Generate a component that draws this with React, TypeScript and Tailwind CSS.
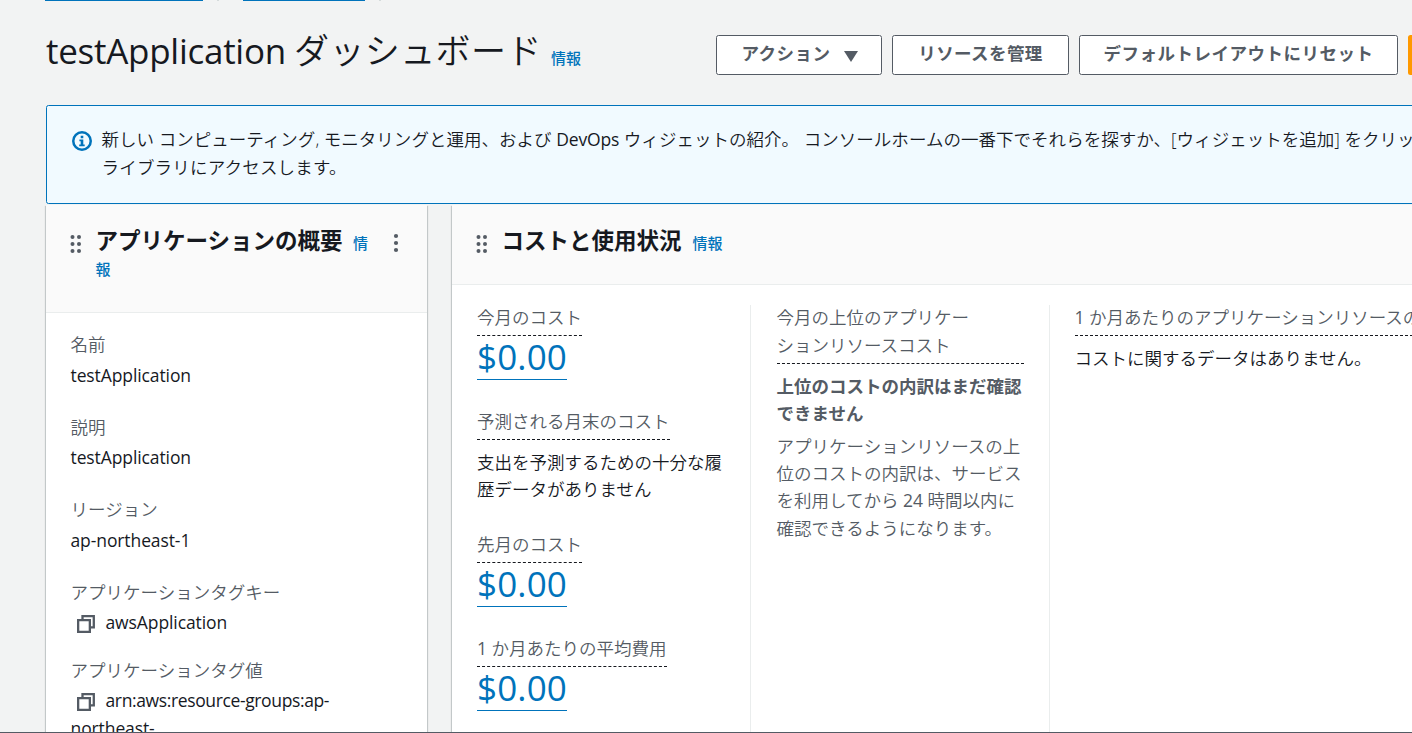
import React from 'react';

const latin = "font-['Open_Sans','Noto_Sans_CJK_JP',sans-serif]";

function DragHandle() {
  return (
    <svg width="12" height="20" viewBox="0 0 12 20" className="shrink-0 fill-[#545b64]">
      {[3, 10, 17].map((y) => (
        <g key={y}>
          <circle cx="2.5" cy={y} r="2" />
          <circle cx="9" cy={y} r="2" />
        </g>
      ))}
    </svg>
  );
}

function Kebab() {
  return (
    <svg width="6" height="20" viewBox="0 0 6 20" className="shrink-0 fill-[#545b64]">
      {[3, 10, 17].map((y) => (
        <circle key={y} cx="3" cy={y} r="2.1" />
      ))}
    </svg>
  );
}

function CopyIcon() {
  return (
    <svg width="18" height="18" viewBox="0 0 18 18" className="mt-[2px] shrink-0 fill-none stroke-[#545b64] stroke-[2.3]">
      <path d="M5.5 5V1.15h11.3v11.3H13" />
      <path d="M1.15 5.2h11.7v11.6H1.15z" />
    </svg>
  );
}

function InfoIcon() {
  return (
    <svg width="20" height="20" viewBox="0 0 20 20" className="shrink-0">
      <circle cx="10" cy="10" r="8.75" className="fill-none stroke-[#0073bb] stroke-[2.5]" />
      <path d="M8.7 4.8h2.6v2.4H8.7zM7.4 8.4h3.9v5h1.4v1.8H7.2v-1.8h1.5v-3.2H7.4z" className="fill-[#0073bb]" />
    </svg>
  );
}

function Field({ label, children }: { label: string; children: React.ReactNode }) {
  return (
    <div>
      <div className="font-[350] text-[#545b64]">{label}</div>
      <div className="mt-[3px] tracking-[-0.1px]">{children}</div>
    </div>
  );
}

function Term({ children }: { children: React.ReactNode }) {
  return (
    <span className="block w-fit whitespace-nowrap border-b border-dashed border-[#16191f] pb-[3.5px] pt-[0.5px] font-[350] text-[#545b64]">
      {children}
    </span>
  );
}

function Amount() {
  return (
    <div className="mt-[2px] h-[42px] w-[90px] border-b border-[#0073bb] text-[35px] leading-[38px] tracking-[0.15px] text-[#0073bb]">
      $0.00
    </div>
  );
}

const cardShadow =
  'shadow-[0_1px_1px_0_rgba(0,28,36,0.3),1px_1px_1px_0_rgba(0,28,36,0.15),-1px_1px_1px_0_rgba(0,28,36,0.15)]';
const button =
  'flex h-[40px] shrink-0 items-center justify-center rounded-[2.5px] border border-[#545b64] bg-white pb-[3px] font-bold text-[#545b64] whitespace-nowrap';

export default function App() {
  return (
    <div
      className={`${latin} flex h-[733px] w-[1412px] flex-col overflow-hidden border-b border-[#545b64] bg-[#f2f3f3] text-[17.5px] leading-[27.5px] text-[#16191f]`}
      lang="ja"
    >
      <div className="flex h-px shrink-0 pl-[45px]">
        <div className="w-[158px] bg-[#0073bb]" />
        <div className="ml-[14px] w-[2px] bg-[#d5dbdb]" />
        <div className="ml-[24px] w-[122px] bg-[#0073bb]" />
        <div className="ml-[14px] w-[2px] bg-[#d5dbdb]" />
      </div>

      <header className="flex h-[104px] shrink-0 pl-[46px]">
        <h1 className="flex w-[670px] shrink-0 items-baseline whitespace-nowrap pt-[27px] text-[35px] leading-[45px]">
          <span className="w-[248px] tracking-[-0.27px]">testApplication</span>
          <span className="w-[257px] font-[350] tracking-[0.4px]">ダッシュボード</span>
          <a className="text-[15px] font-medium text-[#0073bb]">情報</a>
        </h1>
        <div className="flex gap-[10px] pt-[34px]">
          <button className={`${button} w-[166px] gap-[13px] pl-[1px]`}>
            <span className="tracking-[0.5px]">アクション</span>
            <svg width="14" height="12" viewBox="0 0 14 12" className="mt-[4px] fill-[#545b64]">
              <path d="M0 1h14L7 12z" />
            </svg>
          </button>
          <button className={`${button} w-[177px] tracking-[0.4px]`}>リソースを管理</button>
          <button className={`${button} w-[319px] tracking-[0.5px]`}>デフォルトレイアウトにリセット</button>
          <button className="h-[40px] w-[200px] shrink-0 rounded-[2.5px] bg-[#ff9900]" />
        </div>
      </header>

      <section className="ml-[46px] flex h-[99px] w-[1500px] shrink-0 rounded-[2.5px] border border-[#0073bb] bg-[#f1faff] pl-[25px] pt-[20px] font-[350]">
        <div className="pt-[5px]">
          <InfoIcon />
        </div>
        <div className="ml-[9.5px] whitespace-nowrap">
          <p className="tracking-[0.03px]">
            新しい コンピューティング, モニタリングと運用、および{' '}
            <span className="font-normal tracking-[-0.15px]">DevOps</span>{' '}
            ウィジェットの紹介。 コンソールホームの一番下でそれらを探すか、[ウィジェットを追加] をクリックして
          </p>
          <p className="tracking-[0.2px]">ライブラリにアクセスします。</p>
        </div>
      </section>

      <main className="flex shrink-0 gap-[25px] pl-[46px] pt-[1px]">
        <section className={`h-[600px] w-[381px] shrink-0 bg-white ${cardShadow}`}>
          <div className="flex h-[108px] border-b border-[#eaeded] bg-[#fafafa] pl-[24px] pt-[22px]">
            <div className="pt-[7px]">
              <DragHandle />
            </div>
            <h2 className="ml-[13.5px] w-[284.5px] break-all pt-[1px] text-[22.5px] font-bold leading-[26px]">
              アプリケーションの概要{' '}
              <a className="ml-[4.5px] text-[15px] font-medium leading-[20px] text-[#0073bb]">情報</a>
            </h2>
            <div className="ml-[13px] pt-[6px]">
              <Kebab />
            </div>
          </div>
          <div className="flex flex-col gap-[24.5px] pl-[24.5px] pt-[18px]">
            <Field label="名前">testApplication</Field>
            <Field label="説明">testApplication</Field>
            <Field label="リージョン">ap-northeast-1</Field>
            <div className="flex flex-col gap-[20px]">
              <Field label="アプリケーションタグキー">
                <div className="flex items-center gap-[10.5px] pl-[6.5px]">
                  <CopyIcon />
                  awsApplication
                </div>
              </Field>
              <Field label="アプリケーションタグ値">
                <div className="flex items-center gap-[10.5px] pl-[6.5px] tracking-[-0.37px]">
                  <CopyIcon />
                  arn:aws:resource-groups:ap-
                </div>
                <div>northeast-</div>
              </Field>
            </div>
          </div>
        </section>

        <section className={`h-[600px] w-[1100px] shrink-0 bg-white ${cardShadow}`}>
          <div className="flex h-[80px] border-b border-[#eaeded] bg-[#fafafa] pl-[24px] pt-[22px]">
            <div className="pt-[7px]">
              <DragHandle />
            </div>
            <h2 className="ml-[13.5px] pt-[1px] text-[22.5px] font-bold leading-[26px]">
              コストと使用状況{' '}
              <a className="ml-[5px] text-[15px] font-medium leading-[20px] text-[#0073bb]">情報</a>
            </h2>
          </div>
          <div className="flex pl-[25px] pt-[20px]">
            <div className="flex h-[500px] w-[274px] shrink-0 flex-col gap-[28px] border-r border-[#eaeded]">
              <div className="-mt-[2px]">
                <Term>今月のコスト</Term>
                <Amount />
              </div>
              <div>
                <Term>予測される月末のコスト</Term>
                <p className="-mb-px mt-[9px] w-[248px] font-[350] leading-[27px]">
                  支出を予測するための十分な履歴データがありません
                </p>
              </div>
              <div>
                <Term>先月のコスト</Term>
                <Amount />
              </div>
              <div>
                <Term>
                  <span className="font-normal">1</span> か月あたりの平均費用
                </Term>
                <Amount />
              </div>
            </div>
            <div className="h-[500px] w-[299px] shrink-0 border-r border-[#eaeded] pl-[25.5px]">
              <div className="-mt-px w-[247px] border-b border-dashed border-[#16191f] pb-[4px] font-[350] text-[#545b64]">
                今月の上位のアプリケー
                <br />
                ションリソースコスト
              </div>
              <p className="mt-[9px] whitespace-nowrap font-bold leading-[27px] text-[#545b64]">
                上位のコストの内訳はまだ確認
                <br />
                できません
              </p>
              <p className="mt-[5.5px] whitespace-nowrap font-[350] leading-[27.4px] text-[#545b64]">
                アプリケーションリソースの上
                <br />
                位のコストの内訳は、サービス
                <br />
                を利用してから <span className="font-normal">24</span> 時間以内に
                <br />
                確認できるようになります。
              </p>
            </div>
            <div className="pl-[24.5px]">
              <div className="-mt-[2px]">
                <Term>
                  <span className="font-normal">1</span> か月あたりのアプリケーションリソースのコスト
                </Term>
              </div>
              <p className="mt-[9px] font-[350]">コストに関するデータはありません。</p>
            </div>
          </div>
        </section>
      </main>
    </div>
  );
}
